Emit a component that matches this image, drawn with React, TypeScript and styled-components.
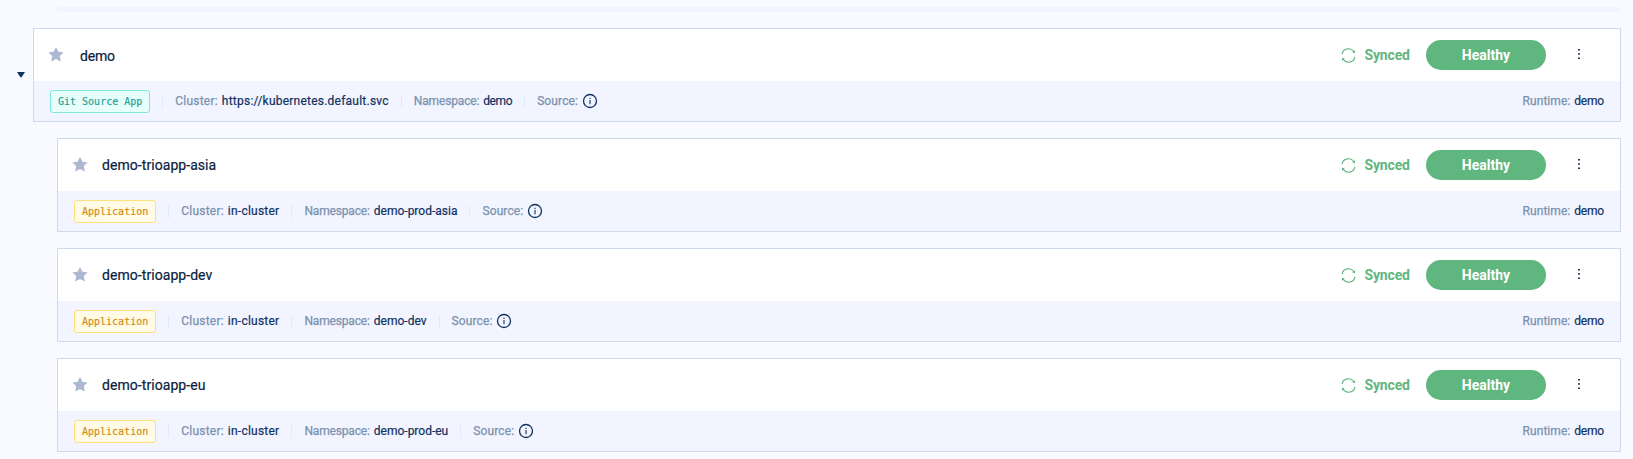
import React from "react";
import styled, { createGlobalStyle } from "styled-components";

const GlobalStyle = createGlobalStyle`
  *, *::before, *::after { box-sizing: border-box; }
  body {
    margin: 0;
    height: 459px;
    overflow: hidden;
    background: #f8faff;
    font-family: Roboto, "Liberation Sans", sans-serif;
  }
`;

const Page = styled.main`
  display: flex;
  flex-direction: column;
  gap: 16px;
  padding: 7px 12px 0 16px;
`;

const PreviousEdge = styled.div`
  height: 5px;
  margin-left: 41px;
  background: #f3f4ff;
  border-radius: 0 0 2px 2px;
`;

const Row = styled.div<{ $nested: boolean }>`
  display: flex;
  align-items: center;
  padding-left: ${(p) => (p.$nested ? 41 : 0)}px;
`;

const Toggle = styled.button`
  display: flex;
  width: 17px;
  padding: 0 0 0 1px;
  border: 0;
  background: none;
`;

const Card = styled.article`
  flex: 1;
  height: 94px;
  border: 1px solid #ced9eb;
  background: #fff;
`;

const CardHeader = styled.header`
  display: flex;
  align-items: center;
  height: 52px;
  padding: 0 35px 0 13px;
`;

const Name = styled.h2<{ $nested: boolean }>`
  flex: 1;
  margin: ${(p) => (p.$nested ? "0 0 0 13px" : "2px 0 0 15px")};
  font-size: 14px;
  font-weight: 400;
  line-height: 20px;
  letter-spacing: ${(p) => (p.$nested ? 0.06 : -0.2)}px;
  color: #0b2240;
  -webkit-text-stroke: 0.2px #0b2240;
`;

const SyncState = styled.span`
  display: flex;
  align-items: center;
  gap: 8.5px;
  width: 85px;
  color: #5fb67e;
  font-size: 14px;
  font-weight: 700;
  line-height: 20px;
  letter-spacing: -0.15px;
`;

const Health = styled.span`
  width: 120px;
  height: 30px;
  border-radius: 15px;
  background: #5fb67e;
  color: #fff;
  font-size: 14px;
  font-weight: 700;
  line-height: 30px;
  text-align: center;
`;

const MenuButton = styled.button`
  display: flex;
  justify-content: center;
  width: 12px;
  margin: 0 0 2px 27px;
  padding: 0;
  border: 0;
  background: none;
`;

const CardFooter = styled.footer`
  display: flex;
  align-items: center;
  height: 40px;
  padding: 0 16px;
  background: #f2f4ff;
  font-size: 12px;
  line-height: 16px;
`;

const Tag = styled.span<{ $git: boolean }>`
  height: 23px;
  padding: 0 7px;
  border: 1px solid ${(p) => (p.$git ? "#80e8d8" : "#ffe07f")};
  border-radius: 3px;
  background: ${(p) => (p.$git ? "#e6fffb" : "#fffbe6")};
  color: ${(p) => (p.$git ? "#259c98" : "#d48a10")};
  -webkit-text-stroke: 0.15px currentColor;
  font-family: "DejaVu Sans Mono", monospace;
  font-size: 10px;
  line-height: 22px;
  white-space: nowrap;
`;

const Divider = styled.i`
  width: 1px;
  height: 13px;
  margin: 0 12px;
  background: #dfeafa;
`;

const Field = styled.span`
  display: flex;
  align-items: center;
  gap: 4px;
  white-space: nowrap;
`;

const Label = styled.span<{ $spacing: number }>`
  color: #7b92ad;
  -webkit-text-stroke: 0.25px #7b92ad;
  letter-spacing: ${(p) => p.$spacing}px;
`;

const Value = styled.span<{ $spacing: number }>`
  color: #10325f;
  -webkit-text-stroke: 0.2px #10325f;
  letter-spacing: ${(p) => p.$spacing}px;
`;

const Spacer = styled.span`
  flex: 1;
`;

const StarIcon = () => (
  <svg width="18" height="18" viewBox="0 0 18 18">
    <path
      d="M9 1 11.4 5.8 16.6 6.5 12.8 10.1 13.8 15.4 9 12.9 4.2 15.4 5.2 10.1 1.4 6.5 6.6 5.8Z"
      fill="#acb8cf"
    />
  </svg>
);

const SyncIcon = () => (
  <svg width="15" height="15" viewBox="0 0 15 15" fill="none" stroke="#5fb67e" strokeWidth="1.1">
    <path d="M1.1 6.2A6.3 6.3 0 0 1 13 4.4M13.9 8.8A6.3 6.3 0 0 1 2 10.6" />
    <path d="M14 2.2V5.2L11.2 4.3ZM1 12.8V9.8L3.8 10.7Z" fill="#5fb67e" stroke="none" />
  </svg>
);

const DotsIcon = () => (
  <svg width="4" height="12" viewBox="0 0 4 12" fill="#1c3a5f">
    <rect x="1" y="1" width="2" height="1.5" />
    <rect x="1" y="5.2" width="2" height="1.5" />
    <rect x="1" y="9.5" width="2" height="1.5" />
  </svg>
);

const InfoIcon = () => (
  <svg width="16" height="16" viewBox="0 0 16 16" fill="none" stroke="#10325f">
    <circle cx="8" cy="8" r="6.5" strokeWidth="1.3" />
    <path d="M8 7V11.2M8 4.7V6" strokeWidth="1.1" />
  </svg>
);

const CaretIcon = () => (
  <svg width="8" height="6" viewBox="0 0 8 6">
    <path d="M0 0H8L4.6 5.2H3.4Z" fill="#10325f" />
  </svg>
);

interface Application {
  name: string;
  cluster: string;
  namespace: string;
  root?: boolean;
}

const applications: Application[] = [
  { name: "demo", cluster: "https://kubernetes.default.svc", namespace: "demo", root: true },
  { name: "demo-trioapp-asia", cluster: "in-cluster", namespace: "demo-prod-asia" },
  { name: "demo-trioapp-dev", cluster: "in-cluster", namespace: "demo-dev" },
  { name: "demo-trioapp-eu", cluster: "in-cluster", namespace: "demo-prod-eu" },
];

const ApplicationRow = ({ name, cluster, namespace, root = false }: Application) => (
  <Row $nested={!root}>
    {root && (
      <Toggle aria-label="Collapse">
        <CaretIcon />
      </Toggle>
    )}
    <Card>
      <CardHeader>
        <StarIcon />
        <Name $nested={!root}>{name}</Name>
        <SyncState>
          <SyncIcon />
          Synced
        </SyncState>
        <Health>Healthy</Health>
        <MenuButton aria-label="Actions">
          <DotsIcon />
        </MenuButton>
      </CardHeader>
      <CardFooter>
        <Tag $git={root}>{root ? "Git Source App" : "Application"}</Tag>
        <Divider />
        <Field>
          <Label $spacing={0.22}>Cluster:</Label>
          <Value $spacing={root ? 0.23 : 0.24}>{cluster}</Value>
        </Field>
        <Divider />
        <Field>
          <Label $spacing={-0.16}>Namespace:</Label>
          <Value $spacing={root ? -0.4 : 0}>{namespace}</Value>
        </Field>
        <Divider />
        <Field>
          <Label $spacing={0.12}>Source:</Label>
          <InfoIcon />
        </Field>
        <Spacer />
        <Field>
          <Label $spacing={0.05}>Runtime:</Label>
          <Value $spacing={-0.2}>demo</Value>
        </Field>
      </CardFooter>
    </Card>
  </Row>
);

export default function App() {
  return (
    <>
      <GlobalStyle />
      <Page>
        <PreviousEdge />
        {applications.map((application) => (
          <ApplicationRow key={application.name} {...application} />
        ))}
      </Page>
    </>
  );
}
